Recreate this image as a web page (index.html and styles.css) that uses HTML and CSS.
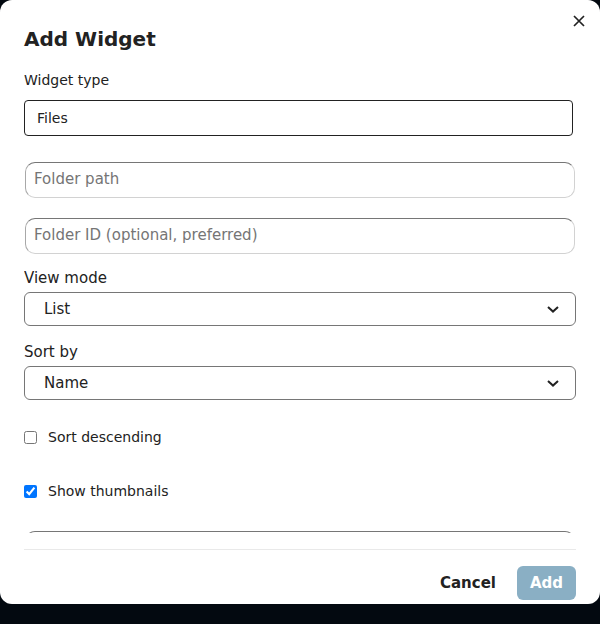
FILE: index.html
```html
<!DOCTYPE html>
<html lang="en">

<head>
    <meta charset="UTF-8">
    <meta name="viewport" content="width=device-width, initial-scale=1.0">
    <title>Add Widget</title>
    <link rel="stylesheet" href="styles.css">
</head>

<body>
    <div class="dialog">
        <div class="dialog-header">
            <h2>Add Widget</h2>
            <button class="close-btn" aria-label="Close">
                <svg width="12" height="12" viewBox="0 0 12 12">
                    <path d="M1 1 L11 11 M11 1 L1 11" stroke="#222" stroke-width="1.7" fill="none" />
                </svg>
            </button>
        </div>
        <div class="dialog-body">
            <label class="field-label small">Widget type</label>
            <input type="text" class="type-input" value="Files" readonly>

            <input type="text" class="soft-input first" placeholder="Folder path">
            <input type="text" class="soft-input" placeholder="Folder ID (optional, preferred)">

            <label class="field-label view">View mode</label>
            <div class="select-wrap">
                <select>
                    <option>List</option>
                    <option>Grid</option>
                </select>
            </div>

            <label class="field-label sort">Sort by</label>
            <div class="select-wrap">
                <select>
                    <option>Name</option>
                    <option>Date</option>
                    <option>Size</option>
                </select>
            </div>

            <label class="check-row first"><input type="checkbox"> Sort descending</label>
            <label class="check-row second"><input type="checkbox" checked> Show thumbnails</label>

            <input type="text" class="soft-input last">
        </div>
        <div class="dialog-footer">
            <button class="btn-cancel">Cancel</button>
            <button class="btn-add" disabled>Add</button>
        </div>
    </div>
</body>

</html>
```

FILE: styles.css
```css
body {
    font-family: 'DejaVu Sans', sans-serif;
    margin: 0;
    height: 624px;
    background-color: #030910;
    color: #222;
    overflow: hidden;
}

.dialog {
    position: relative;
    width: 600px;
    height: 604px;
    background-color: #ffffff;
    border-radius: 12px;
    box-sizing: border-box;
    padding: 0 24px;
    display: flex;
    flex-direction: column;
}

.dialog-header {
    padding-top: 24px;
}

.dialog-header h2 {
    margin: 0;
    font-size: 20px;
    line-height: 30px;
    font-weight: bold;
    color: #222;
}

.close-btn {
    position: absolute;
    top: 15px;
    right: 15px;
    width: 12px;
    height: 12px;
    padding: 0;
    border: none;
    background: none;
    display: flex;
    cursor: pointer;
}

.dialog-body {
    height: 479px;
    overflow: hidden;
    display: flex;
    flex-direction: column;
}

.dialog-body > * {
    flex-shrink: 0;
}

.field-label {
    display: block;
    line-height: 20px;
    font-size: 15px;
    color: #222;
}

.field-label.small {
    font-size: 14px;
    margin-top: 16px;
    margin-bottom: 10px;
}

.field-label.view {
    margin-top: 14px;
    margin-bottom: 4px;
}

.field-label.sort {
    margin-top: 16px;
    margin-bottom: 4px;
}

.type-input {
    width: 549px;
    height: 36px;
    box-sizing: border-box;
    margin: 0;
    padding: 0 12px;
    border: 1px solid #222;
    border-radius: 4px;
    font-family: inherit;
    font-size: 14px;
    color: #222;
    outline: none;
}

.soft-input {
    height: 36px;
    box-sizing: border-box;
    margin: 20px 1px 0 1px;
    padding: 0 8px 3px;
    border-width: 1px;
    border-style: solid;
    border-color: #767676 #d2d2d2 #d2d2d2 #a8a8a8;
    border-radius: 10px;
    font-family: inherit;
    font-size: 15px;
    color: #222;
    outline: none;
}

.soft-input.first {
    margin-top: 26px;
}

.soft-input.last {
    margin-top: 30px;
}

.soft-input::placeholder {
    color: #757575;
}

.select-wrap {
    position: relative;
}

.select-wrap select {
    width: 100%;
    height: 34px;
    margin: 0;
    padding: 0 40px 0 19px;
    border: 1px solid #767676;
    border-radius: 6px;
    background-color: #fff;
    background-image: url("data:image/svg+xml,%3Csvg xmlns='http://www.w3.org/2000/svg' width='12' height='7' viewBox='0 0 12 7'%3E%3Cpath d='M1 1 L6 5.6 L11 1' stroke='%23222' stroke-width='2' fill='none'/%3E%3C/svg%3E");
    background-repeat: no-repeat;
    background-position: right 16px center;
    appearance: none;
    -webkit-appearance: none;
    font-family: inherit;
    font-size: 15px;
    color: #222;
    outline: none;
}

.check-row {
    display: flex;
    align-items: center;
    gap: 11px;
    height: 20px;
    font-size: 14px;
    color: #222;
}

.check-row input {
    margin: 0;
    width: 13px;
    height: 13px;
}

.check-row.first {
    margin-top: 27px;
}

.check-row.second {
    margin-top: 34px;
}

.dialog-footer {
    margin-top: 16px;
    border-top: 1px solid #e9e9e9;
    padding: 16px 0 4px;
    display: flex;
    justify-content: flex-end;
    align-items: center;
    gap: 21px;
}

.btn-cancel {
    padding: 0;
    border: none;
    background: none;
    font-family: inherit;
    font-size: 15px;
    font-weight: bold;
    color: #222;
    cursor: pointer;
}

.btn-add {
    width: 59px;
    height: 34px;
    padding: 0;
    border: none;
    border-radius: 6px;
    background-color: #8aafc4;
    font-family: inherit;
    font-size: 15px;
    font-weight: bold;
    color: #ffffff;
}
```
